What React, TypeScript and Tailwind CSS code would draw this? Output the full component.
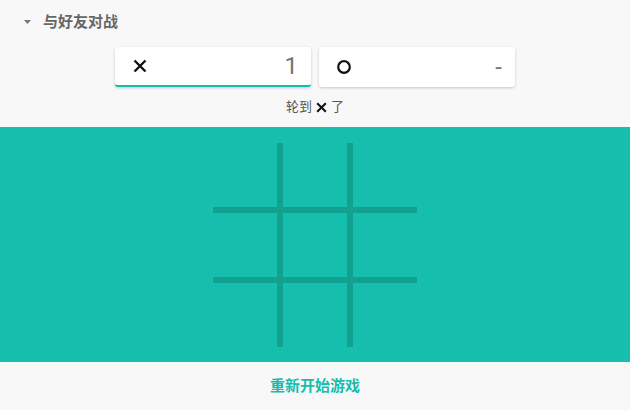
const CrossIcon = ({ size = 14, stroke = 2.4 }: { size?: number; stroke?: number }) => (
  <svg width={size} height={size} viewBox="0 0 14 14" fill="none">
    <path d="M1.5 1.5 L12.5 12.5 M12.5 1.5 L1.5 12.5" stroke="#111" strokeWidth={stroke} />
  </svg>
);

const CircleIcon = () => (
  <svg width={14} height={14} viewBox="0 0 14 14" fill="none">
    <circle cx="7" cy="7" r="5.8" stroke="#111" strokeWidth={2.2} />
  </svg>
);

type CardProps = {
  icon: React.ReactNode;
  score: string;
  active?: boolean;
};

const PlayerCard = ({ icon, score, active }: CardProps) => (
  <div
    className={
      "w-[196px] h-[40px] bg-white rounded-[3px] shadow-[0_1px_3px_rgba(0,0,0,0.2)] flex items-center justify-between pl-[18px] pr-[13px] " +
      (active ? "border-b-2 border-[#15bdac]" : "")
    }
  >
    <span className="flex items-center">{icon}</span>
    <span className="text-[24px] font-normal text-[#757575] leading-none">{score}</span>
  </div>
);

export default function App() {
  return (
    <div
      className="w-[630px] h-[410px] bg-[#f8f8f8] flex flex-col overflow-hidden"
      style={{ fontFamily: "Roboto, 'Noto Sans CJK SC', sans-serif" }}
    >
      <div className="h-[45px] flex items-center pl-[24px] pb-[1px]">
        <svg width="7" height="4" viewBox="0 0 7 4" className="mr-[12px]">
          <path d="M0 0 L7 0 L3.5 4 Z" fill="#777" />
        </svg>
        <span className="text-[15px] font-bold text-[#666]">与好友对战</span>
      </div>

      <div className="flex justify-center gap-[8px] pt-[2px]">
        <PlayerCard icon={<CrossIcon />} score="1" active />
        <PlayerCard icon={<CircleIcon />} score="-" />
      </div>

      <div className="h-[40px] flex items-center justify-center gap-[4px] text-[13px] text-[#555]">
        <span>轮到</span>
        <CrossIcon size={11} stroke={2.6} />
        <span>了</span>
      </div>

      <div className="h-[235px] bg-[#16bead] flex justify-center pt-[16px]">
        <div className="grid grid-cols-[64px_6px_64px_6px_64px] grid-rows-[64px_6px_64px_6px_64px] w-[204px] h-[204px]">
          {Array.from({ length: 25 }).map((_, i) => {
            const r = Math.floor(i / 5);
            const c = i % 5;
            const line = r % 2 === 1 || c % 2 === 1;
            return <div key={i} className={line ? "bg-[#12a08f]" : ""} />;
          })}
        </div>
      </div>

      <div className="flex-1 flex items-center justify-center">
        <button className="text-[15px] font-bold text-[#15bdac]">重新开始游戏</button>
      </div>
    </div>
  );
}
